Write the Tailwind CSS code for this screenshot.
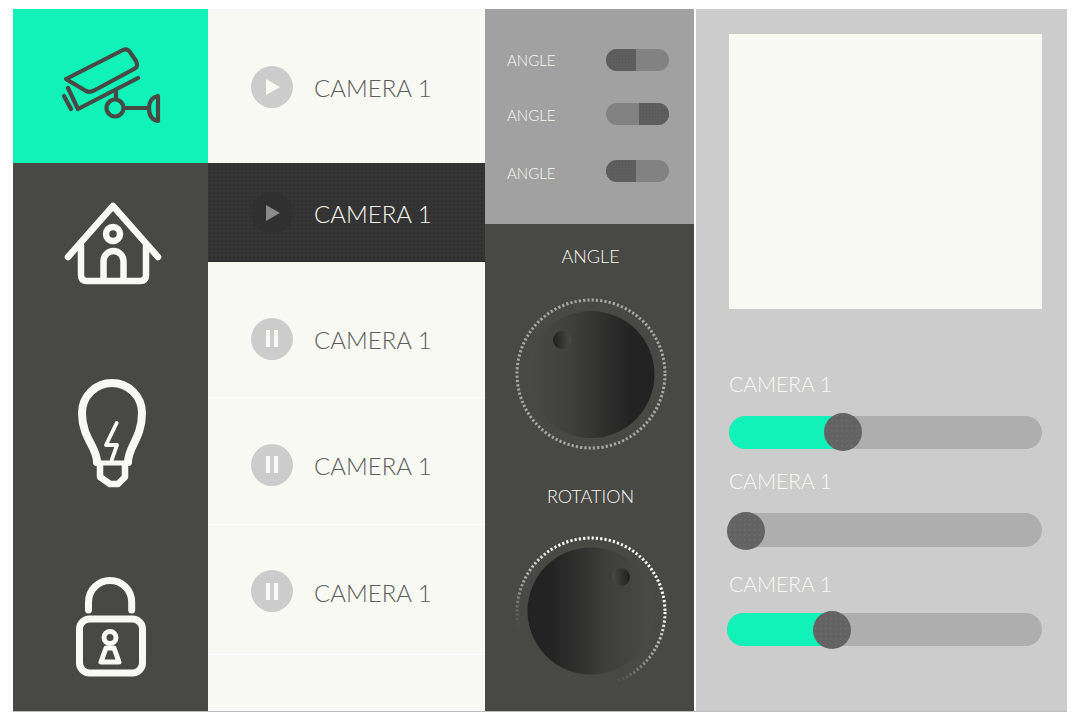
<!DOCTYPE html>
<html lang="en">
<head>
  <meta charset="UTF-8" />
  <title>Camera control panel</title>
  <script src="https://cdn.jsdelivr.net/npm/@tailwindcss/browser@4"></script>
</head>
<body class="bg-white font-['Lato',sans-serif]">
  <div class="w-[1080px] h-[720px] pt-[9px] pl-[13px]">
    <div class="flex h-[702px] w-[1054px] shadow-[0_1px_0_#bbbbbb]">

      <!-- icon column -->
      <div class="w-[195px] flex flex-col bg-[#484844]">
        <div class="h-[154px] bg-[#10f2b8] flex items-center justify-center">
          <svg class="w-[110px] h-[90px]" viewBox="55 40 110 90" fill="none" stroke="#484844" stroke-width="4.200" stroke-linecap="round" stroke-linejoin="round">
            <path d="M65 78 L122 49 Q126 47 129 51 L135 60 Q138 66 133 68 L94 89 Q89 92 85 90 Z" />
            <path d="M67 87 L77 108 L137 77" />
            <path d="M63 95 L70 108" />
            <path d="M115 91 L115 98" />
            <circle cx="114" cy="107" r="8.5" />
            <path d="M123 107 L148 107" />
            <path d="M157 95 C151 96 148 101 148 107 C148 114 151 119 157 120 Z" />
          </svg>
        </div>
        <svg class="w-[110px] h-[90px] mt-[37px] ml-[45px]" viewBox="58 200 110 90" fill="none" stroke="#f9f9f3" stroke-width="6.500" stroke-linecap="round" stroke-linejoin="round">
          <path d="M68 257 L113 206 L158 257" />
          <path d="M81 246 L81 275 Q81 281 87 281 L140 281 Q146 281 146 275 L146 246" />
          <circle cx="113" cy="234" r="7" />
          <path d="M103.500 279 L103.500 261 A10 10 0 0 1 123.500 261 L123.500 279" />
        </svg>
        <svg class="w-[90px] h-[120px] mt-[85px] ml-[54px]" viewBox="67 375 90 120" fill="none" stroke="#f9f9f3" stroke-width="8" stroke-linecap="round" stroke-linejoin="round">
          <path d="M97 462 C97 447 82 438 82 413 A30 30 0 0 1 142 413 C142 438 128 447 128 462" />
          <path d="M96 463 L129 463" stroke-width="5" />
          <path d="M100 464 L100 477 L110 484 L118 484 L125 477 L125 464" stroke-width="6.500" />
          <path d="M116.700 423 L106 445 L117 445 L111.700 460" stroke-width="3.800" />
        </svg>
        <svg class="w-[90px] h-[110px] mt-[77px] ml-[54px]" viewBox="67 572 90 110" fill="none" stroke="#f9f9f3" stroke-width="7" stroke-linecap="round" stroke-linejoin="round">
          <path d="M88.500 610 L88.500 602 A21.600 21.600 0 0 1 131.700 602 L131.700 610" />
          <rect x="79.500" y="619" width="63" height="54" rx="10" />
          <circle cx="110" cy="637.500" r="6" stroke-width="5" />
          <path d="M106 648 L101 662 L119 662 L114 648 Z" stroke-width="5" />
        </svg>
      </div>

      <!-- camera list -->
      <div class="w-[277px] flex flex-col bg-[#f9f9f3] text-[24px] font-light text-[#5c5c5c]">
        <div class="h-[154px] flex items-center gap-[21px] pl-[43px] pt-[2px]">
          <span class="w-[42px] h-[42px] rounded-full bg-[#cccccc] flex items-center justify-center">
            <svg class="w-[14px] h-[16px] ml-[2px]" viewBox="0 0 14 16"><path d="M0 0 L14 8 L0 16 Z" fill="#f9f9f3" /></svg>
          </span>
          <span class="pt-[1px]">CAMERA 1</span>
        </div>
        <div class="h-[99px] flex items-center gap-[21px] pl-[43px] pt-[2px] text-[#f9f9f3] bg-[#353535] bg-[radial-gradient(#303030_1px,transparent_1px)] bg-[size:4px_4px] border-b border-[#2c2c2c]">
          <span class="w-[42px] h-[42px] rounded-full bg-[#303030] flex items-center justify-center">
            <svg class="w-[14px] h-[16px] ml-[2px]" viewBox="0 0 14 16"><path d="M0 0 L14 8 L0 16 Z" fill="#8a8a8a" /></svg>
          </span>
          <span class="pt-[1px]">CAMERA 1</span>
        </div>
        <div class="h-[136px] flex items-center gap-[21px] pl-[43px] pt-[18px] border-b border-white">
          <span class="w-[42px] h-[42px] rounded-full bg-[#cccccc] flex items-center justify-center gap-[4px]">
            <i class="w-[4px] h-[17px] bg-[#f9f9f3]"></i><i class="w-[4px] h-[17px] bg-[#f9f9f3]"></i>
          </span>
          <span class="pt-[3px]">CAMERA 1</span>
        </div>
        <div class="h-[127px] flex items-center gap-[21px] pl-[43px] pt-[7px] border-b border-white">
          <span class="w-[42px] h-[42px] rounded-full bg-[#cccccc] flex items-center justify-center gap-[4px]">
            <i class="w-[4px] h-[17px] bg-[#f9f9f3]"></i><i class="w-[4px] h-[17px] bg-[#f9f9f3]"></i>
          </span>
          <span class="pt-[3px]">CAMERA 1</span>
        </div>
        <div class="h-[130px] flex items-center gap-[21px] pl-[43px] pt-[3px] border-b border-white">
          <span class="w-[42px] h-[42px] rounded-full bg-[#cccccc] flex items-center justify-center gap-[4px]">
            <i class="w-[4px] h-[17px] bg-[#f9f9f3]"></i><i class="w-[4px] h-[17px] bg-[#f9f9f3]"></i>
          </span>
          <span class="pt-[3px]">CAMERA 1</span>
        </div>
      </div>

      <!-- angle controls -->
      <div class="w-[209px] flex flex-col bg-[#484844] text-[#f9f9f3] font-light">
        <div class="h-[215px] bg-[#a1a1a1] pl-[22px] pr-[25px] pt-[40px] text-[15px]">
          <div class="h-[22px] flex items-center justify-between">
            <span>ANGLE</span>
            <span class="w-[63px] h-[22px] rounded-full overflow-hidden flex bg-[#828282]">
              <i class="w-[30px] bg-[#5e5e5e] bg-[radial-gradient(#565656_1px,transparent_1px)] bg-[size:3px_3px]"></i>
            </span>
          </div>
          <div class="h-[22px] mt-[32px] flex items-center justify-between">
            <span class="pt-[2px]">ANGLE</span>
            <span class="w-[63px] h-[22px] rounded-full overflow-hidden flex justify-end bg-[#828282]">
              <i class="w-[30px] bg-[#5e5e5e] bg-[radial-gradient(#565656_1px,transparent_1px)] bg-[size:3px_3px]"></i>
            </span>
          </div>
          <div class="h-[22px] mt-[35px] flex items-center justify-between">
            <span class="pt-[4px]">ANGLE</span>
            <span class="w-[63px] h-[22px] rounded-full overflow-hidden flex bg-[#828282]">
              <i class="w-[30px] bg-[#5e5e5e] bg-[radial-gradient(#565656_1px,transparent_1px)] bg-[size:3px_3px]"></i>
            </span>
          </div>
        </div>
        <div class="flex flex-col items-center pt-[20px] text-[18px] leading-[24px]">
          <span class="ml-[2px]">ANGLE</span>
          <svg class="w-[160px] h-[160px] mt-[26px] ml-[2px]" viewBox="0 0 160 160">
            <defs>
              <linearGradient id="knobA" x1="0" y1="0" x2="1" y2="0">
                <stop offset="0" stop-color="#4a4a47" /><stop offset="0.35" stop-color="#3f3f3d" /><stop offset="0.8" stop-color="#242424" /><stop offset="1" stop-color="#222222" />
              </linearGradient>
              <linearGradient id="dotA" x1="0" y1="0" x2="1" y2="0">
                <stop offset="0" stop-color="#1f1f1f" /><stop offset="1" stop-color="#4a4a47" />
              </linearGradient>
            </defs>
            <circle cx="80" cy="80" r="74" fill="none" stroke="#a8a8a4" stroke-width="3" stroke-dasharray="2.200 2.106" />
            <circle cx="80" cy="80.500" r="63.500" fill="url(#knobA)" />
            <circle cx="51" cy="46" r="9" fill="url(#dotA)" />
          </svg>
          <span class="mt-[30px] ml-[2px]">ROTATION</span>
          <svg class="w-[160px] h-[160px] mt-[24px] ml-[2px]" viewBox="0 0 160 160">
            <defs>
              <linearGradient id="knobB" x1="0" y1="0" x2="1" y2="0">
                <stop offset="0" stop-color="#222222" /><stop offset="0.2" stop-color="#242424" /><stop offset="0.65" stop-color="#3f3f3d" /><stop offset="1" stop-color="#4a4a47" />
              </linearGradient>
              <linearGradient id="dotB" x1="0" y1="0" x2="1" y2="0">
                <stop offset="0" stop-color="#4a4a47" /><stop offset="1" stop-color="#1f1f1f" />
              </linearGradient>
              <linearGradient id="ringB" gradientUnits="userSpaceOnUse" x1="151" y1="63" x2="102.500" y2="150">
                <stop offset="0" stop-color="#ffffff" /><stop offset="0.1" stop-color="#ffffff" /><stop offset="1" stop-color="#ffffff" stop-opacity="0" />
              </linearGradient>
            </defs>
            <circle cx="80" cy="80" r="74" fill="none" stroke="url(#ringB)" stroke-width="3" stroke-dasharray="2.200 2.106" />
            <circle cx="80" cy="79" r="63.500" fill="url(#knobB)" />
            <circle cx="110" cy="45" r="9" fill="url(#dotB)" />
          </svg>
        </div>
      </div>

      <!-- preview and sliders -->
      <div class="w-[371px] ml-[2px] bg-[#cccccc] pl-[33px] pr-[25px] pt-[25px] text-[21px] font-light text-[#f9f9f3] leading-[26px]">
        <div class="w-[313px] h-[275px] bg-[#f9f9f3]"></div>
        <p class="mt-[62px]">CAMERA 1</p>
        <div class="relative h-[33px] mt-[19px] rounded-full bg-[#aeaeae]">
          <div class="w-[114px] h-full rounded-l-full bg-[#10f2b8]"></div>
          <span class="absolute left-[95px] top-[-3px] w-[38px] h-[38px] rounded-full bg-[#636363] bg-[radial-gradient(#6b6b6b_1px,transparent_1px)] bg-[size:5px_5px]"></span>
        </div>
        <p class="mt-[19px]">CAMERA 1</p>
        <div class="relative h-[34px] mt-[19px] rounded-full bg-[#aeaeae]">
          <span class="absolute left-[-2px] top-[-1px] w-[38px] h-[38px] rounded-full bg-[#636363] bg-[radial-gradient(#6b6b6b_1px,transparent_1px)] bg-[size:5px_5px]"></span>
        </div>
        <p class="mt-[24px]">CAMERA 1</p>
        <div class="relative h-[33px] mt-[16px] ml-[-2px] rounded-full bg-[#aeaeae]">
          <div class="w-[105px] h-full rounded-l-full bg-[#10f2b8]"></div>
          <span class="absolute left-[86px] top-[-2px] w-[38px] h-[38px] rounded-full bg-[#636363] bg-[radial-gradient(#6b6b6b_1px,transparent_1px)] bg-[size:5px_5px]"></span>
        </div>
      </div>
    </div>
  </div>
</body>
</html>
